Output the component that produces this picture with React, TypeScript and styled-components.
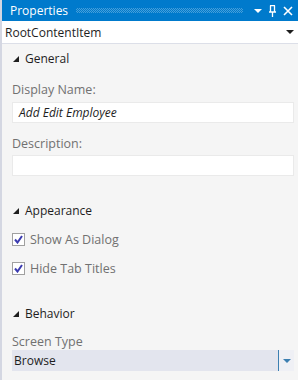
import React from "react";
import styled, { createGlobalStyle } from "styled-components";

const Global = createGlobalStyle`
  html, body { margin: 0; padding: 0; background: #f5f5f5; }
  body { font-family: "Open Sans", "Noto Sans", sans-serif; }
  * { box-sizing: border-box; }
`;

const Panel = styled.div`
  width: 298px;
  height: 380px;
  background: #f5f5f5;
  border-left: 2px solid #d4d7e2;
  display: flex;
  flex-direction: column;
  overflow: hidden;
`;

const TitleBar = styled.div`
  height: 21px;
  background: #007acc;
  display: flex;
  align-items: center;
  padding: 0 5px 0 8px;
  gap: 6px;
`;

const Title = styled.span`
  color: #ffffff;
  font-size: 12px;
  line-height: 21px;
`;

const Grip = styled.div`
  flex: 1;
  height: 5px;
  margin: 0 5px 0 2px;
  background: repeating-conic-gradient(rgba(255, 255, 255, 0.28) 0 25%, transparent 0 50%) 0 0 / 2px 2px;
`;

const TitleIcons = styled.div`
  display: flex;
  align-items: center;
  gap: 6px;
`;

const Combo = styled.div`
  height: 23px;
  background: #ffffff;
  border-bottom: 1px solid #dcdfe8;
  display: flex;
  align-items: center;
  justify-content: space-between;
  padding: 0 4px 0 3px;
  font-size: 12px;
  color: #1e1e1e;
`;

const Body = styled.div`
  flex: 1;
  display: flex;
  flex-direction: column;
  padding: 6px 4px 0 10px;
`;

const Section = styled.div<{ $gap?: number }>`
  display: flex;
  flex-direction: column;
  margin-bottom: ${(p) => p.$gap ?? 0}px;
`;

const SectionHeader = styled.div<{ $mb?: number }>`
  height: 17px;
  display: flex;
  align-items: center;
  gap: 6px;
  font-size: 12px;
  color: #1e1e1e;
  margin: 0 0 ${(p) => p.$mb ?? 12}px 1px;
`;

const Label = styled.div<{ $mb?: number }>`
  font-size: 12.5px;
  color: #717171;
  line-height: 16px;
  margin-bottom: ${(p) => p.$mb ?? 4}px;
`;

const TextBox = styled.div<{ $mb?: number }>`
  height: 21px;
  background: #ffffff;
  border: 1px solid #eaeaea;
  display: flex;
  align-items: center;
  padding: 0 6px;
  font-size: 12px;
  font-style: italic;
  color: #1e1e1e;
  margin-bottom: ${(p) => p.$mb ?? 0}px;
`;

const CheckRow = styled.div<{ $mb?: number }>`
  display: flex;
  align-items: center;
  gap: 5px;
  height: 16px;
  font-size: 12.5px;
  color: #717171;
  margin-bottom: ${(p) => p.$mb ?? 0}px;
`;

const Box = styled.div`
  width: 13px;
  height: 13px;
  border: 1px solid #a0a0a0;
  background: #ffffff;
  display: flex;
  align-items: center;
  justify-content: center;
`;

const Select = styled.div`
  height: 21px;
  background: #e3e5ee;
  display: flex;
  align-items: center;
  font-size: 12px;
  color: #1e1e1e;
`;

const SelectText = styled.div`
  flex: 1;
  padding-left: 2px;
`;

const SelectButton = styled.div`
  width: 16px;
  height: 21px;
  border-left: 1px solid #3c7fb1;
  background: #eff0f5;
  display: flex;
  align-items: center;
  justify-content: center;
`;

const Tri = () => (
  <svg width="6" height="6" viewBox="0 0 6 6">
    <polygon points="6,0 6,6 0,6" fill="#1e1e1e" />
  </svg>
);

const Down = ({ color = "#1e1e1e" }: { color?: string }) => (
  <svg width="8" height="4" viewBox="0 0 8 4">
    <polygon points="0,0 8,0 4,4" fill={color} />
  </svg>
);

const Check = () => (
  <svg width="9" height="9" viewBox="0 0 9 9">
    <path d="M1 4.5 L3.5 7.5 L8 1" stroke="#3b3bb0" strokeWidth="2" fill="none" />
  </svg>
);

const Pin = () => (
  <svg width="9" height="12" viewBox="0 0 9 12">
    <path d="M2 0.5 H7 M2.5 0.5 V7 M6.5 0.5 V7 M1 7 H8 M4.5 7 V12" stroke="#ffffff" strokeWidth="1.3" fill="none" />
  </svg>
);

const Close = () => (
  <svg width="10" height="10" viewBox="0 0 10 10">
    <path d="M1 1 L9 9 M9 1 L1 9" stroke="#ffffff" strokeWidth="1.6" />
  </svg>
);

export default function App() {
  return (
    <>
      <Global />
      <Panel>
        <TitleBar>
          <Title>Properties</Title>
          <Grip />
          <TitleIcons>
            <Down color="#ffffff" />
            <Pin />
            <Close />
          </TitleIcons>
        </TitleBar>
        <Combo>
          <span>RootContentItem</span>
          <Down />
        </Combo>
        <Body>
          <Section $gap={26}>
            <SectionHeader $mb={15}>
              <Tri />
              General
            </SectionHeader>
            <Label>Display Name:</Label>
            <TextBox $mb={13}>Add Edit Employee</TextBox>
            <Label $mb={3}>Description:</Label>
            <TextBox />
          </Section>
          <Section $gap={29}>
            <SectionHeader>
              <Tri />
              Appearance
            </SectionHeader>
            <CheckRow $mb={13}>
              <Box>
                <Check />
              </Box>
              Show As Dialog
            </CheckRow>
            <CheckRow>
              <Box>
                <Check />
              </Box>
              Hide Tab Titles
            </CheckRow>
          </Section>
          <Section>
            <SectionHeader>
              <Tri />
              Behavior
            </SectionHeader>
            <Label $mb={0}>Screen Type</Label>
            <Select>
              <SelectText>Browse</SelectText>
              <SelectButton>
                <Down color="#3c7fb1" />
              </SelectButton>
            </Select>
          </Section>
        </Body>
      </Panel>
    </>
  );
}
